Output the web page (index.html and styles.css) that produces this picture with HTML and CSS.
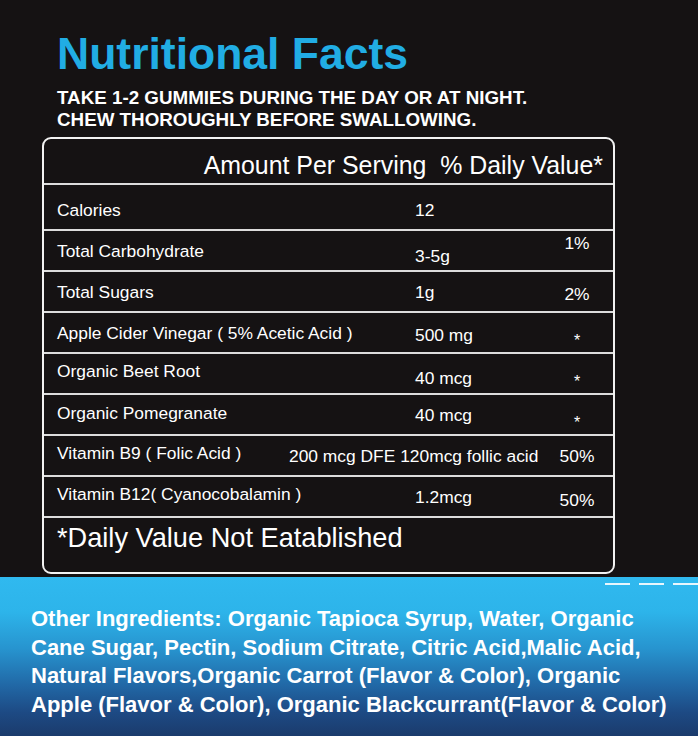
FILE: index.html
```html
<!DOCTYPE html>
<html lang="en">
<head>
<meta charset="utf-8">
<title>Nutritional Facts</title>
<link rel="stylesheet" href="styles.css">
</head>
<body>
<main class="page">
  <section class="top">
    <h1 class="title">Nutritional Facts</h1>
    <p class="directions">TAKE 1-2 GUMMIES DURING THE DAY OR AT NIGHT.<br>CHEW THOROUGHLY BEFORE SWALLOWING.</p>
    <div class="facts">
      <div class="facts-head">Amount Per Serving&nbsp; % Daily Value*</div>
      <div class="row row-cal">
        <span class="label down3">Calories</span>
        <span class="amt down3">12</span>
        <span class="dv"></span>
      </div>
      <div class="row">
        <span class="label">Total Carbohydrate</span>
        <span class="amt down5">3-5g</span>
        <span class="dv up8">1%</span>
      </div>
      <div class="row">
        <span class="label">Total Sugars</span>
        <span class="amt">1g</span>
        <span class="dv down2">2%</span>
      </div>
      <div class="row">
        <span class="label">Apple Cider Vinegar ( 5% Acetic Acid )</span>
        <span class="amt down2">500 mg</span>
        <span class="dv star">*</span>
      </div>
      <div class="row">
        <span class="label up3">Organic Beet Root</span>
        <span class="amt down4">40 mcg</span>
        <span class="dv star">*</span>
      </div>
      <div class="row">
        <span class="label up2">Organic Pomegranate</span>
        <span class="amt">40 mcg</span>
        <span class="dv star">*</span>
      </div>
      <div class="row row-wide">
        <span class="label up3">Vitamin B9 ( Folic Acid )</span>
        <span class="amt">200 mcg DFE 120mcg follic acid</span>
        <span class="dv">50%</span>
      </div>
      <div class="row">
        <span class="label up3">Vitamin B12( Cyanocobalamin )</span>
        <span class="amt">1.2mcg</span>
        <span class="dv down3">50%</span>
      </div>
      <div class="facts-foot">*Daily Value Not Eatablished</div>
    </div>
  </section>
  <section class="ingredients">
    <div class="dashes"><span class="dash"></span><span class="dash"></span><span class="dash"></span></div>
    <p class="ing-text">Other Ingredients: Organic Tapioca Syrup, Water, Organic<br>Cane Sugar, Pectin, Sodium Citrate, Citric Acid,Malic Acid,<br>Natural Flavors,Organic Carrot (Flavor &amp; Color), Organic<br>Apple (Flavor &amp; Color), Organic Blackcurrant(Flavor &amp; Color)</p>
  </section>
</main>
</body>
</html>
```

FILE: styles.css
```css
html, body {
  margin: 0;
  padding: 0;
}
body {
  width: 698px;
  height: 736px;
  overflow: hidden;
  background: #151213;
  font-family: "Liberation Sans", Arial, sans-serif;
  color: #ffffff;
}
.page {
  display: flex;
  flex-direction: column;
  height: 736px;
}
.top {
  padding: 32px 0 0 0;
}
.title {
  margin: 0 0 0 57px;
  font-size: 44.5px;
  line-height: 44px;
  font-weight: 700;
  color: #21ade4;
}
.directions {
  margin: 11px 0 0 57px;
  font-size: 18.8px;
  line-height: 22px;
  font-weight: 700;
  color: #ffffff;
}
.facts {
  margin: 6px 0 0 42px;
  width: 569px;
  border: 2px solid #f2f2f2;
  border-radius: 9px;
  display: flex;
  flex-direction: column;
}
.facts-head {
  height: 46px;
  box-sizing: border-box;
  padding: 12px 10px 0 0;
  text-align: right;
  font-size: 24.9px;
  line-height: 28px;
  border-bottom: 2px solid #dcdcdc;
}
.row {
  display: grid;
  grid-template-columns: 358px 137px 50px;
  align-items: center;
  height: 39px;
  padding: 0 11px 0 13px;
  border-bottom: 2px solid #dcdcdc;
  font-size: 17.4px;
  line-height: 20px;
  white-space: nowrap;
}
.row-cal {
  height: 44px;
}
.row-wide {
  grid-template-columns: 232px 263px 50px;
}
.dv {
  text-align: center;
}
.star {
  font-size: 16px;
  margin-top: 16px;
}
.up2 { margin-bottom: 4px; }
.up3 { margin-bottom: 6px; }
.up8 { margin-bottom: 16px; }
.down2 { margin-top: 4px; }
.down3 { margin-top: 6px; }
.down4 { margin-top: 8px; }
.down5 { margin-top: 10px; }
.facts-foot {
  height: 54px;
  box-sizing: border-box;
  padding: 6px 0 0 13px;
  font-size: 27.2px;
  line-height: 27px;
}
.ingredients {
  margin-top: 3px;
  flex: 1;
  background: linear-gradient(180deg, #30b9ef 0%, #2db4ea 22%, #2794cf 45%, #2168a6 68%, #1d4a84 85%, #1b3b6c 100%);
  padding-top: 6px;
}
.dashes {
  display: flex;
  justify-content: flex-end;
  gap: 9px;
}
.dash {
  display: block;
  width: 25px;
  height: 2px;
  background: #e8f6fd;
}
.ing-text {
  margin: 20px 0 0 31px;
  font-size: 22px;
  line-height: 28.7px;
  font-weight: 700;
  color: #ffffff;
  white-space: nowrap;
}
```
